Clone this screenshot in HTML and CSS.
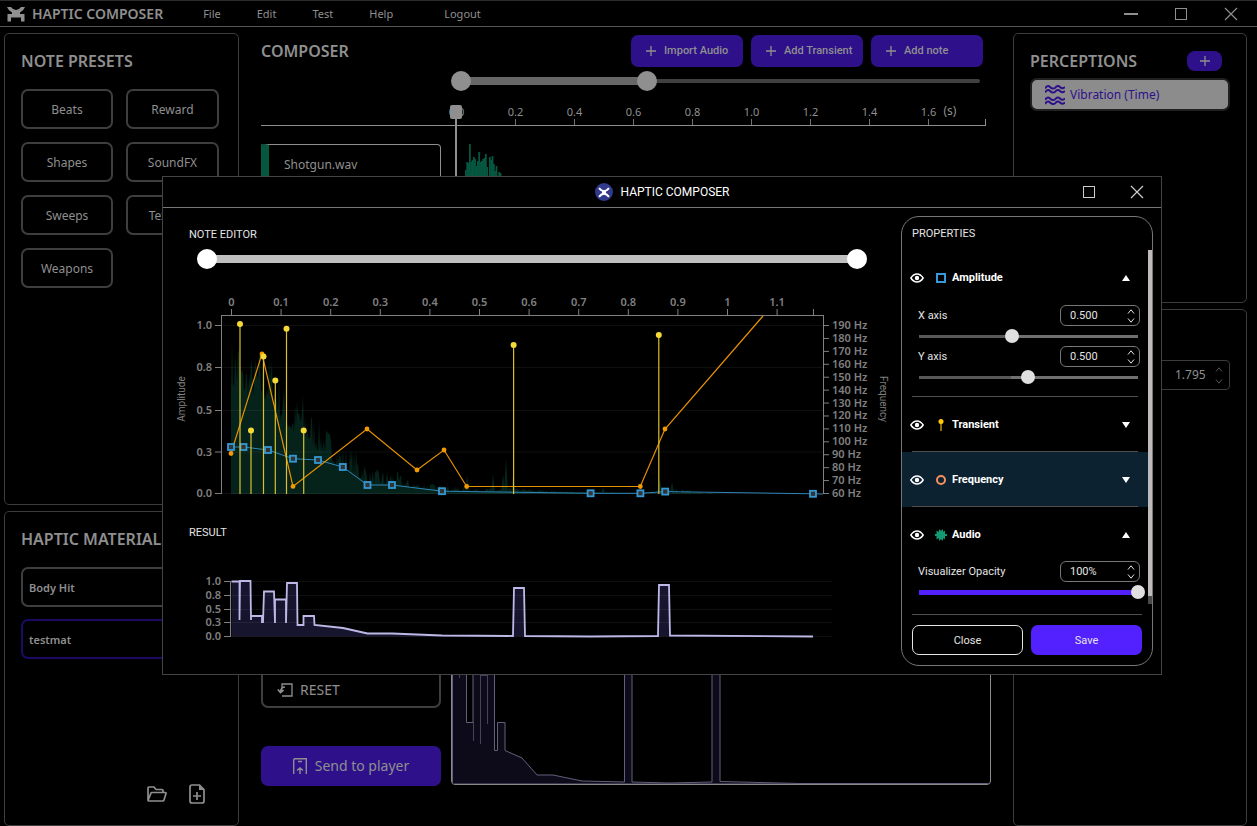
FILE: index.html
```html
<!DOCTYPE html>
<html lang="en">
<head>
<meta charset="utf-8">
<title>Haptic Composer</title>
<link rel="stylesheet" href="styles.css">
</head>
<body>
<svg class="defs" aria-hidden="true">
  <symbol id="mark" viewBox="0 0 18 16"><path d="M0 1H4Q6 4 9 4T14 1H18Q16.500 5 13 6.500V8H17.500V15.500H14V11.500H4V15.500H.5V8H5V6.500Q1.500 5 0 1Z" fill="currentColor"/></symbol>
  <symbol id="mark-x" viewBox="0 0 18 16"><path d="M1.500 1.500Q5 6 9 6T16.500 1.500M1.500 14.500Q5 10 9 10T16.500 14.500" fill="none" stroke="currentColor" stroke-width="3"/><path d="M6 5H12V11H6Z" fill="currentColor"/></symbol>
  <symbol id="eye" viewBox="0 0 14 10"><path d="M.8 5Q3.500 1 7 1T13.200 5Q10.500 9 7 9T.8 5Z" fill="none" stroke="currentColor" stroke-width="1.400"/><circle cx="7" cy="5" r="2.200" fill="currentColor"/></symbol>
  <symbol id="plus" viewBox="0 0 10 10"><path d="M5 0V10M0 5H10" stroke="currentColor" stroke-width="1.300"/></symbol>
  <symbol id="square" viewBox="0 0 14 14"><rect x="1.500" y="1.500" width="11" height="11" fill="none" stroke="currentColor"/></symbol>
  <symbol id="cross" viewBox="0 0 14 14"><path d="M1 1L13 13M13 1L1 13" stroke="currentColor" stroke-width="1.200"/></symbol>
  <symbol id="up" viewBox="0 0 8 5"><path d="M1 4.500L4 .8L7 4.500" fill="none" stroke="currentColor"/></symbol>
  <symbol id="down" viewBox="0 0 8 5"><path d="M1 .5L4 4.200L7 .5" fill="none" stroke="currentColor"/></symbol>
</svg>

<header class="titlebar">
  <svg class="mark"><use href="#mark"/></svg>
  <h1 class="brand">HAPTIC COMPOSER</h1>
  <nav class="menu">
    <button>File</button><button>Edit</button><button>Test</button><button>Help</button><button class="logout">Logout</button>
  </nav>
  <div class="window-controls">
    <button aria-label="Minimize"><svg viewBox="0 0 14 14"><path d="M0 7H14" stroke="currentColor" stroke-width="2"/></svg></button>
    <button aria-label="Maximize"><svg><use href="#square"/></svg></button>
    <button aria-label="Close window"><svg><use href="#cross"/></svg></button>
  </div>
</header>

<main class="workspace">
  <div class="column column-left">
    <section class="panel">
      <h2 class="heading">NOTE PRESETS</h2>
      <div class="presets">
        <button class="outline">Beats</button><button class="outline">Reward</button>
        <button class="outline">Shapes</button><button class="outline">SoundFX</button>
        <button class="outline">Sweeps</button><button class="outline">Textures</button>
        <button class="outline">Weapons</button>
      </div>
    </section>
    <section class="panel materials">
      <h2 class="heading">HAPTIC MATERIALS</h2>
      <button class="outline material">Body Hit</button>
      <button class="outline material selected">testmat</button>
      <div class="file-actions">
        <button aria-label="Open folder"><svg viewBox="0 0 20 16"><path d="M1 14V2Q1 1 2 1H7L9 3.500H15Q16 3.500 16 4.500V6.500M1 14.500L4 7Q4.300 6.500 5 6.500H18.200Q19.300 6.500 19 7.500L17 14Q16.700 15 15.700 15H2Q1 15 1 14" fill="none" stroke="currentColor" stroke-width="1.700"/></svg></button>
        <button aria-label="New file"><svg viewBox="0 0 16 20"><path d="M3 1H10.500L15 5.500V17Q15 19 13 19H3Q1 19 1 17V3Q1 1 3 1ZM8 8V16M4 12H12" fill="none" stroke="currentColor" stroke-width="1.700"/><path d="M10 1V6H15Z" fill="currentColor"/></svg></button>
      </div>
    </section>
  </div>

  <section class="composer">
    <div class="composer-head">
      <h2 class="heading">COMPOSER</h2>
      <div class="actions">
        <button class="add"><svg><use href="#plus"/></svg>Import Audio</button>
        <button class="add"><svg><use href="#plus"/></svg>Add Transient</button>
        <button class="add"><svg><use href="#plus"/></svg>Add note</button>
      </div>
    </div>
    <div class="dual zoom">
      <div class="rail"></div><div class="fill" style="width:34.500%"></div>
      <input type="range" aria-label="View start" min="0" max="1000" value="0">
      <input type="range" aria-label="View end" min="0" max="1000" value="358">
    </div>
    <div class="stage">
      <svg class="timeline" id="timeline" viewBox="261 100 730 78" role="img" aria-label="Timeline"></svg>
      <div class="track">Shotgun.wav</div>
    </div>
    <div class="output">
      <div class="output-actions">
        <button class="outline reset"><svg viewBox="0 0 16 14"><path d="M5 5V1H15V13H5" fill="none" stroke="currentColor" stroke-width="1.300"/><path d="M8 4Q4 4 3.500 9M.8 6.500L3.500 9.500L6.500 7" fill="none" stroke="currentColor" stroke-width="1.700"/></svg>RESET</button>
        <button class="send"><svg viewBox="0 0 14 16"><path d="M.7 16V2Q.7.7 2 .7H13.300V16M5 3.500H9M7 16V10M4 12.500L7 10L10 12.500" fill="none" stroke="currentColor" stroke-width="1.400"/></svg>Send to player</button>
      </div>
      <div class="preview">
        <svg viewBox="452 600 538 184" role="img" aria-label="Output preview">
          <path class="preview-a" d="M452.500 784V640H466.500V722.500H473V640H494.500V750.500H497.500V722.500H505V750.500L522 758L537 775H553L582 781L624.500 782V640H632V782L669 783L712 782V640H720V781.500L800 783.500H990V784Z"/>
          <path class="preview-b" d="M459.500 640V678M473.500 722V741M480.500 640V744M487.500 640V724M480 675.500H488"/>
        </svg>
      </div>
    </div>
  </section>

  <div class="column column-right">
    <section class="panel perceptions">
      <div class="perceptions-head">
        <h2 class="heading">PERCEPTIONS</h2>
        <button class="add-small" aria-label="Add perception"><svg><use href="#plus"/></svg></button>
      </div>
      <button class="perception"><svg viewBox="0 0 20 20"><path d="M0 3.500Q2.500-.5 5 2T10 3Q12.500-.5 15 2T20 2M0 7.500Q2.500 3.500 5 6T10 7Q12.500 3.500 15 6T20 6M0 15Q2.500 11 5 13.500T10 14.500Q12.500 11 15 13.500T20 13.500M0 19Q2.500 15 5 17.500T10 18.500Q12.500 15 15 17.500T20 17.500" fill="none" stroke="currentColor" stroke-width="1.900"/></svg>Vibration (Time)</button>
    </section>
    <section class="panel details">
      <div class="stepper wide">
        <input type="text" aria-label="Duration" value="1.795">
        <span class="spin"><button aria-label="Increase duration"><svg><use href="#up"/></svg></button><button aria-label="Decrease duration"><svg><use href="#down"/></svg></button></span>
      </div>
    </section>
  </div>
</main>

<div class="dialog" role="dialog" aria-labelledby="dialog-title">
  <header class="dialog-bar">
    <span></span>
    <div class="dialog-name"><span class="badge"><svg><use href="#mark-x"/></svg></span><h2 id="dialog-title">HAPTIC COMPOSER</h2></div>
    <div class="dialog-controls">
      <button aria-label="Maximize dialog"><svg><use href="#square"/></svg></button>
      <button aria-label="Close dialog"><svg><use href="#cross"/></svg></button>
    </div>
  </header>
  <div class="dialog-body">
    <div class="editor">
      <h3 class="label">NOTE EDITOR</h3>
      <div class="dual bright">
        <div class="fill" style="width:97%"></div>
        <input type="range" aria-label="Range start" min="0" max="100" value="0">
        <input type="range" aria-label="Range end" min="0" max="100" value="100">
      </div>
      <svg class="chart note-chart" id="note" viewBox="163 285 738 225" role="img" aria-label="Note curves"></svg>
      <h3 class="label">RESULT</h3>
      <svg class="chart result-chart" id="result" viewBox="163 570 738 75" role="img" aria-label="Result curve"></svg>
    </div>
    <aside class="properties">
      <h3 class="properties-title">PROPERTIES</h3>
      <div class="scroll">
        <div class="groups">
          <section class="group">
            <div class="group-head">
              <button class="eye" aria-label="Toggle amplitude"><svg><use href="#eye"/></svg></button>
              <svg class="symbol" viewBox="0 0 12 12"><rect x="2" y="2" width="8" height="8" fill="none" stroke="#3498db" stroke-width="2"/></svg>
              <h4>Amplitude</h4><button class="caret" aria-label="Collapse amplitude"><svg viewBox="0 0 8 6"><path d="M0 6L4 0L8 6Z" fill="currentColor"/></svg></button>
            </div>
            <div class="field"><label for="xa">X axis</label>
              <div class="stepper"><input id="xa" type="text" value="0.500"><span class="spin"><button aria-label="Increase X"><svg><use href="#up"/></svg></button><button aria-label="Decrease X"><svg><use href="#down"/></svg></button></span></div>
            </div>
            <input class="slider" type="range" aria-label="X axis slider" min="0" max="1000" value="425">
            <div class="field"><label for="ya">Y axis</label>
              <div class="stepper"><input id="ya" type="text" value="0.500"><span class="spin"><button aria-label="Increase Y"><svg><use href="#up"/></svg></button><button aria-label="Decrease Y"><svg><use href="#down"/></svg></button></span></div>
            </div>
            <input class="slider" type="range" aria-label="Y axis slider" min="0" max="1000" value="496">
          </section>
          <section class="group short">
            <div class="group-head">
              <button class="eye" aria-label="Toggle transient"><svg><use href="#eye"/></svg></button>
              <svg class="symbol" viewBox="0 0 12 12"><path d="M6 1V12" stroke="#8a6d0a" stroke-width="2"/><circle cx="6" cy="2.500" r="2.500" fill="#fc0"/></svg>
              <h4>Transient</h4><button class="caret" aria-label="Expand transient"><svg viewBox="0 0 8 6"><path d="M0 0L4 6L8 0Z" fill="currentColor"/></svg></button>
            </div>
          </section>
          <section class="group short active">
            <div class="group-head">
              <button class="eye" aria-label="Toggle frequency"><svg><use href="#eye"/></svg></button>
              <svg class="symbol" viewBox="0 0 12 12"><circle cx="6" cy="6" r="4" fill="none" stroke="#f4915e" stroke-width="2"/></svg>
              <h4>Frequency</h4><button class="caret" aria-label="Expand frequency"><svg viewBox="0 0 8 6"><path d="M0 0L4 6L8 0Z" fill="currentColor"/></svg></button>
            </div>
          </section>
          <section class="group last">
            <div class="group-head">
              <button class="eye" aria-label="Toggle audio"><svg><use href="#eye"/></svg></button>
              <svg class="symbol" viewBox="0 0 12 12"><path d="M0 5H1.500V1.500L3.500 3L4.500 0L6 2L7.500 0L8.500 3L10 1.500V5H12V7H10V10.500L8.500 9L7.500 12L6 10L4.500 12L3.500 9L1.500 10.500V7H0Z" fill="#149a72"/></svg>
              <h4>Audio</h4><button class="caret" aria-label="Collapse audio"><svg viewBox="0 0 8 6"><path d="M0 6L4 0L8 6Z" fill="currentColor"/></svg></button>
            </div>
            <div class="field"><label for="vo">Visualizer Opacity</label>
              <div class="stepper"><input id="vo" type="text" value="100%"><span class="spin"><button aria-label="Increase opacity"><svg><use href="#up"/></svg></button><button aria-label="Decrease opacity"><svg><use href="#down"/></svg></button></span></div>
            </div>
            <input class="slider violet" type="range" aria-label="Opacity slider" min="0" max="100" value="100">
          </section>
        </div>
        <div class="scrollbar"><div class="scrollbar-thumb"></div></div>
      </div>
      <div class="footer"><button class="close">Close</button><button class="save">Save</button></div>
    </aside>
  </div>
</div>
<script src="app.js"></script>
</body>
</html>
```
FILE: styles.css
```css
* { box-sizing: border-box; }
body {
  margin: 0;
  height: 100vh;
  min-height: 720px;
  display: flex;
  flex-direction: column;
  overflow: hidden;
  position: relative;
  background: #000;
  color: #8f8f8f;
  font: 12px/16px "Noto Sans", sans-serif;
}
h1, h2, h3, h4 { margin: 0; font-weight: 600; }
button { margin: 0; padding: 0; border: 0; background: none; color: inherit; font: inherit; display: flex; align-items: center; justify-content: center; }
svg { display: block; }
.defs { position: absolute; width: 0; height: 0; }

.titlebar { display: flex; align-items: center; height: 27px; flex: none; border-top: 1px solid #2c2c2c; border-bottom: 1px solid #555; padding: 0 19px 0 7px; }
.mark { width: 18px; height: 16px; }
.brand { font-size: 14px; line-height: 20px; margin-left: 7px; }
.menu { display: flex; gap: 36px; margin-left: 40px; font-size: 11px; }
.logout { margin-left: 15px; }
.window-controls { display: flex; gap: 36px; margin-left: auto; }
.window-controls svg { width: 14px; height: 14px; }

.workspace { flex: 1; min-height: 0; display: grid; grid-template-columns: 235px 1fr 234px; padding: 6px 10px 0 4px; }
.column { display: flex; flex-direction: column; gap: 6px; min-height: 0; }
.panel { border: 1px solid #3c3c3c; border-radius: 5px; padding: 16px; }
.column-left .panel:first-child { flex: 0 0 472px; }
.materials { flex: 1; display: flex; flex-direction: column; padding-right: 20px; }
.heading { font-size: 16px; line-height: 22px; }
.outline { height: 40px; border: 2px solid #3e3e3e; border-radius: 7px; padding-top: 2px; }
.presets { display: grid; grid-template-columns: 92px 93px; gap: 13px; margin-top: 17px; }
.materials .heading { white-space: nowrap; }
.material { justify-content: flex-start; padding-left: 6px; margin-top: 12px; font-size: 11px; font-weight: 600; }
.heading + .material { margin-top: 17px; }
.selected { border-color: #1c0a66; }
.file-actions { display: flex; align-items: center; gap: 22px; margin: auto 13px 5px auto; }
.file-actions svg { height: 16px; width: 20px; }
.file-actions button + button svg { height: 20px; width: 16px; }

.composer { padding: 2px 22px 40px; display: flex; flex-direction: column; min-height: 0; }
.composer-head { display: flex; justify-content: space-between; align-items: center; padding-right: 8px; }
.actions { display: flex; gap: 8px; }
.add { width: 112px; height: 32px; border-radius: 7px; background: #2e108b; font: 500 11px/16px "Roboto", sans-serif; justify-content: flex-start; padding-left: 15px; gap: 8px; }
.add svg { width: 10px; height: 10px; }

.dual { display: grid; align-items: center; height: 20px; }
.dual > * { grid-area: 1 / 1; }
.dual input { appearance: none; width: 100%; height: 20px; margin: 0; background: none; pointer-events: none; }
.dual input::-webkit-slider-thumb { appearance: none; width: 20px; height: 20px; border-radius: 50%; background: #8f8f8f; pointer-events: auto; }
.rail { height: 4px; margin: 0 10px; background: #404040; border-radius: 2px; }
.fill { height: 8px; margin-left: 10px; background: #676767; }
.bright .fill { background: #bfbfbf; }
.bright input::-webkit-slider-thumb { background: #fff; }
.zoom { margin: 4px 1px 0 190px; }

.stage { display: grid; flex: 1; align-content: start; margin-top: 9px; }
.stage > * { grid-area: 1 / 1; }
.timeline { width: 100%; height: auto; }
.track { width: 180px; height: 60px; margin-top: 44px; border: 1px solid #8f8f8f; border-left: 8px solid #06573f; border-radius: 0 4px 0 0; padding: 11px 15px; font-size: 12px; line-height: 18px; }
.timeline text, .chart text { fill: currentColor; }
.timeline text { font-size: 11px; text-anchor: middle; }
.timeline .unit { font-size: 12px; }

.output { display: grid; grid-template-columns: 180px 1fr; gap: 10px; align-items: end; }
.output-actions { display: grid; gap: 38px; }
.reset { justify-content: flex-start; padding: 4px 0 0 14px; gap: 7px; font-size: 14px; }
.reset svg { width: 16px; height: 14px; }
.send { height: 40px; background: #2e108b; border-radius: 7px; font-size: 14px; gap: 8px; }
.send svg { width: 14px; height: 16px; }
.preview { border: 1px solid #8a8a8a; border-radius: 4px; overflow: hidden; margin-bottom: 1px; }
.preview svg { width: 100%; height: auto; }
.preview-a { fill: #0d0b1a; stroke: #62607a; }
.preview-b { fill: none; stroke: #45435a; }

.perceptions { flex: 0 0 270px; }
.perceptions-head { display: flex; justify-content: space-between; align-items: center; padding-right: 8px; }
.add-small { width: 35px; height: 20px; border-radius: 8px; background: #2e108b; }
.add-small svg { width: 10px; height: 10px; }
.perception { width: 100%; height: 33px; margin-top: 6px; border: 2px solid #202020; border-radius: 7px; background: #8c8c8c; color: #2e108b; justify-content: flex-start; padding-left: 13px; gap: 5px; font-size: 12px; }
.perception svg { width: 20px; height: 20px; }
.details { flex: 1; padding-top: 50px; }

.stepper { display: flex; align-items: center; width: 80px; height: 21px; border: 1px solid #777; border-radius: 6px; padding: 0 4px 0 9px; }
.stepper input { width: 100%; min-width: 0; border: 0; padding: 0; background: none; color: inherit; font: inherit; outline: 0; }
.spin { display: grid; gap: 4px; }
.spin svg { width: 8px; height: 5px; }
.wide { width: 100px; height: 30px; margin-left: auto; border-color: #3c3c3c; border-radius: 4px; padding: 0 6px 0 44px; }
.wide .spin { gap: 7px; color: #555; }

.dialog { position: absolute; top: 176px; left: 162px; right: 95px; background: #000; color: #e4e4e4; border: 1px solid #444; font: 11px/16px "Roboto", sans-serif; }
.dialog-bar { display: grid; grid-template-columns: 1fr auto 1fr; align-items: center; height: 31px; border-bottom: 1px solid #777; }
.dialog-name { display: flex; align-items: center; gap: 8px; }
.dialog-name h2 { font-size: 12px; font-weight: 400; color: #fff; }
.badge { width: 18px; height: 18px; border-radius: 50%; background: #323a8c; color: #fff; display: grid; place-items: center; }
.badge svg { width: 12px; height: 11px; }
.dialog-controls { display: flex; justify-content: flex-end; gap: 34px; padding-right: 17px; color: #ccc; }
.dialog-controls svg { width: 14px; height: 14px; }
.dialog-body { display: grid; grid-template-columns: 1fr 252px; padding: 8px 8px 8px 0; }
.label { font-size: 11px; font-weight: 400; margin-left: 26px; }
.editor > .label:first-child { margin-top: 11px; }
.bright { margin: 6px 34px 0; }
.chart { width: 100%; height: auto; color: #808080; font: 600 11px/12px "Noto Sans", sans-serif; }
.note-chart { margin-top: 16px; }
.note-chart + .label { margin-top: 15px; }
.result-chart { margin-top: 29px; }
.chart .axis-name { font: 10px "Roboto", sans-serif; text-anchor: middle; }
.mid { text-anchor: middle; }
.end { text-anchor: end; }

.properties { border: 1px solid #777; border-radius: 18px; padding: 9px 0 10px; align-self: start; }
.properties-title { font-size: 11px; font-weight: 400; margin-left: 10px; }
.scroll { display: flex; height: 354px; margin-top: 8px; }
.groups { flex: 1; padding-top: 10px; }
.scrollbar { width: 4px; background: #4a4a4a; }
.scrollbar-thumb { height: 346px; background: #bfbbbb; }
.group { border: solid transparent; border-width: 0 10px; height: 137px; padding: 9px 0 0; background: linear-gradient(#505050, #505050) bottom / 100% 1px no-repeat; }
.group.short { height: 55px; padding-top: 19px; }
.group.active { background-color: #0d2230; }
.group.last { height: auto; padding-top: 19px; background: none; }
.group-head { display: flex; align-items: center; height: 18px; margin-left: -2px; }
.eye svg { width: 14px; height: 10px; color: #fff; }
.symbol { width: 12px; height: 12px; margin: 0 5px 0 11px; }
h4 { font-size: 11px; line-height: 16px; font-weight: 700; color: #fff; }
.caret { margin-left: auto; margin-right: 8px; color: #fff; }
.caret svg { width: 8px; height: 6px; }
.field { display: flex; align-items: center; justify-content: space-between; padding-left: 6px; margin-right: -2px; height: 21px; }
.group-head + .field { margin-top: 18px; }
.last .group-head + .field { margin-top: 17px; }
.slider { appearance: none; display: block; height: 14px; width: calc(100% + 7px); margin: 3px 0; background: linear-gradient(90deg, #585858 42%, #707070 42%) center / calc(100% - 14px) 3px no-repeat; }
.slider::-webkit-slider-thumb { appearance: none; width: 14px; height: 14px; border-radius: 50%; background: #e0e0e0; }
.violet { background: linear-gradient(#5320ff, #5320ff) center / calc(100% - 14px) 5px no-repeat; }
.footer { display: grid; grid-template-columns: 1fr 1fr; gap: 8px; margin: 10px 10px 0; border-top: 1px solid #505050; padding-top: 10px; }
.footer button { height: 30px; border-radius: 7px; padding-top: 2px; }
.close { border: 1px solid #e4e4e4; }
.save { background: #5320ff; }
```
FILE: app.js
```js
// Axis, curve and waveform drawing for the three charts.
const line = (x1, y1, x2, y2, stroke, w = 1) =>
  `<path d="M${x1} ${y1}L${x2} ${y2}" stroke="${stroke}" stroke-width="${w}"/>`;
const label = (x, y, text, cls = "") => `<text x="${x}" y="${y}" class="${cls}">${text}</text>`;
const join = (pts) => pts.map((p) => p.join(" ")).join("L");

let seed = 7;
const random = () => (seed = (seed * 16807) % 2147483647) / 2147483647;
const sample = (pts, x) => {
  for (let i = 1; i < pts.length; i++) {
    if (x <= pts[i][0]) {
      const [a, b] = [pts[i - 1], pts[i]];
      return a[1] + ((b[1] - a[1]) * (x - a[0])) / (b[0] - a[0]);
    }
  }
  return pts[pts.length - 1][1];
};

function timeline() {
  const axis = "#8f8f8f";
  let s = line(261, 125.5, 986, 125.5, axis) + line(985.5, 119, 985.5, 126, axis);
  for (let i = 0; i < 9; i++) {
    const x = 456.5 + i * 59;
    s += line(x, 119, x, 125, "#707070") + label(x, 116, (i * 0.2).toFixed(1));
  }
  s += label(950, 115, "(s)", "unit");
  const bars = [6, 14, 13, 32, 14, 16, 19, 17, 10, 15, 24, 14, 15, 17, 18, 22, 9, 0, 19, 16, 20, 12, 5, 10, 0, 4, 3];
  bars.forEach((h, i) => { s += `<rect x="${465 + i * 1.33}" y="${176 - h}" width="1.800" height="${h + 2}" fill="#06573f"/>`; });
  s += line(456, 116, 456, 178, axis, 2) + `<rect x="450" y="105" width="12" height="14" rx="2" fill="${axis}"/>`;
  document.getElementById("timeline").innerHTML = s;
}

function noteChart() {
  const axis = "#808080";
  let s = "";
  const high = [[231, 335], [238, 325], [243, 360], [262, 345], [272, 350], [282, 375], [292, 410], [300, 380], [306, 400], [316, 415], [325, 425], [335, 435], [345, 442], [362, 450], [368, 470], [392, 468], [410, 480], [440, 484], [465, 488], [520, 488], [560, 491], [640, 493], [665, 486], [700, 491], [720, 494]];
  const low = [[231, 390], [270, 405], [285, 430], [300, 440], [325, 455], [342, 472], [365, 483], [400, 488], [440, 491], [720, 494]];
  let d = "M231 494";
  for (let x = 231; x < 720; x += 1) {
    const a = sample(high, x), b = sample(low, x);
    d += `L${x} ${(b + (a - b) * random() ** 1.6).toFixed(1)}`;
  }
  s += `<path d="${d}V494Z" fill="#05231a"/>`;
  [[467, 475], [493, 474], [503, 474], [506, 458], [513, 476], [603, 488], [660, 478], [672, 482]].forEach(([x, y]) => {
    s += `<path d="M${x - 2} 492L${x} ${y}L${x + 2} 492Z" fill="#05231a"/>`;
  });
  [["1.0", 325.5], ["0.8", 367.5], ["0.5", 410.5], ["0.3", 452], ["0.0", 493.5]].forEach(([t, y]) => {
    s += line(221, y, 823, y, "rgba(255,255,255,.06)") + line(215, y, 221, y, axis) + label(212, y + 3.5, t, "end");
  });
  for (let i = 0; i < 12; i++) {
    const x = 231.5 + i * 49.6;
    s += line(x, 309, x, 315, axis) + label(x, 306, i % 10 ? (i / 10).toFixed(1) : i / 10, "mid");
  }
  s += line(221, 315.5, 824, 315.5, axis) + line(221.5, 315, 221.5, 494, axis);
  s += line(823.5, 315, 823.5, 494, axis) + line(813.5, 309, 813.5, 315, axis);
  for (let i = 0; i < 14; i++) {
    const y = 493.5 - i * 12.92;
    s += line(823, y, 829, y, axis) + label(832, y + 3.5, `${60 + i * 10} Hz`);
  }
  s += `<text class="axis-name" transform="translate(185 399) rotate(-90)">Amplitude</text>`;
  s += `<text class="axis-name" transform="translate(880 399) rotate(90)">Frequency</text>`;

  const blue = [[231, 447], [243.5, 447], [268, 450], [293, 458.7], [318, 460], [342.8, 467], [367.5, 485], [392, 485], [442, 491.2], [590.6, 493.3], [640.4, 493.3], [665.2, 491.6], [813, 493.8]];
  const amber = [[231, 453.5], [262, 353.8], [293, 486.4], [367, 429], [417, 470], [444, 450], [466.7, 486.5], [640.3, 486.5], [665, 429]];
  const stems = [[240, 324], [251, 430.5], [263.5, 356.5], [275.3, 380.5], [286.5, 328.7], [303.7, 430.6], [513.6, 345], [658.8, 334.9]];
  s += `<path d="M${join(blue)}L823 494" fill="none" stroke="#2f86b8"/>`;
  s += `<path d="M${join(amber)}L763 316" fill="none" stroke="#e69100" stroke-width="1.200"/>`;
  amber.forEach(([x, y]) => { s += `<circle cx="${x}" cy="${y}" r="2.400" fill="#f39a00"/>`; });
  blue.forEach(([x, y]) => { s += `<rect x="${x - 3}" y="${y - 3}" width="6" height="6" fill="#333" stroke="#3498d4" stroke-width="1.800"/>`; });
  stems.forEach(([x, y]) => { s += line(x, y, x, 494, "#d9c030", 1.2) + `<circle cx="${x}" cy="${y}" r="3" fill="#f5d936"/>`; });
  document.getElementById("note").innerHTML = s;
}

function resultChart() {
  const axis = "#808080";
  const pts = "231.500 581.500H239.500V620L240 581H250.500L251 620V616H262V622H263L264 591.500H274L275 623V599.500H286V623L287 583H297L297.500 625H303.500V616H314L314.500 625L343 628L367.500 633.500H392L442 635.500L513 636L514 588H524L525 636L590 636.500L658 636L659 585H669L670 635.500L813 636.500";
  let s = `<path d="M${pts}H231.500Z" fill="#17152e"/>`;
  [["1.0", 581.5], ["0.8", 595.5], ["0.5", 609.5], ["0.3", 622.5], ["0.0", 636.5]].forEach(([t, y]) => {
    s += line(231, y, 832, y, "rgba(255,255,255,.06)") + line(224, y, 231, y, axis) + label(221, y + 3.5, t, "end");
  });
  s += line(230.5, 581, 230.5, 637, axis) + `<path d="M${pts}" fill="none" stroke="#bdb9e6" stroke-width="1.800"/>`;
  document.getElementById("result").innerHTML = s;
}

timeline();
noteChart();
resultChart();
```
